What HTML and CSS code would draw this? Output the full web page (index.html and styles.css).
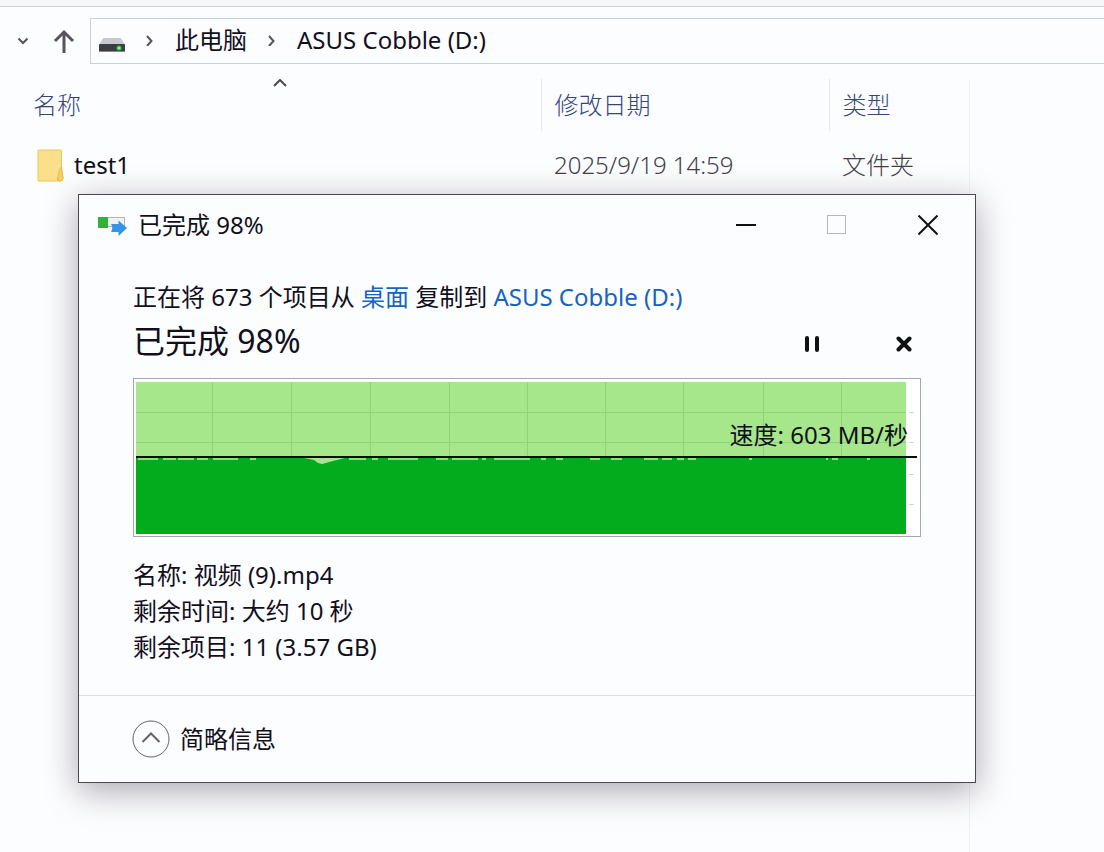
FILE: index.html
```html
<!DOCTYPE html>
<html lang="zh-CN">

<head>
    <meta charset="UTF-8">
    <meta name="viewport" content="width=device-width, initial-scale=1.0">
    <title>ASUS Cobble (D:)</title>
    <link rel="stylesheet" href="styles.css">
</head>

<body>
    <div class="explorer">
        <nav class="toolbar">
            <button class="nav-button" aria-label="最近位置">
                <svg width="12" height="8" viewBox="0 0 12 8"><path d="M1.5 1.5 L6 6 L10.5 1.5" /></svg>
            </button>
            <button class="nav-button up" aria-label="上移">
                <svg width="22" height="24" viewBox="0 0 22 24"><path d="M11 24 V3 M2 12 L11 3 L20 12" /></svg>
            </button>
            <div class="address">
                <svg width="26" height="26" viewBox="0 0 26 26">
                    <path d="M5 11 H21 Q22 11 22.500 12 L26 18 H0 L3.500 12 Q4 11 5 11 Z" fill="#c6cad0" />
                    <rect y="17" width="26" height="8" rx="1" fill="#3b3e43" />
                    <path d="M0 24.500 H26" stroke="#85888d" />
                    <circle cx="20" cy="21" r="2.500" fill="#35c94b" />
                    <circle cx="20" cy="21" r="1" fill="#b9ffbc" />
                </svg>
                <svg class="arrow" width="10" height="12" viewBox="0 0 10 12"><path d="M2 2 L6.500 7 L2 12" /></svg>
                <a href="#">此电脑</a>
                <svg class="arrow" width="10" height="12" viewBox="0 0 10 12"><path d="M2 2 L6.500 7 L2 12" /></svg>
                <a href="#">ASUS Cobble (D:)</a>
            </div>
        </nav>
        <div class="content">
            <div class="list">
                <table class="files">
                    <colgroup>
                        <col>
                        <col class="date">
                        <col class="type">
                    </colgroup>
                    <thead>
                        <tr>
                            <th>
                                <svg class="sort" width="14" height="8" viewBox="0 0 14 8"><path d="M1 7 L7 1 L13 7" /></svg>
                                <button>名称</button>
                            </th>
                            <th><button>修改日期</button></th>
                            <th><button>类型</button></th>
                        </tr>
                    </thead>
                    <tbody>
                        <tr>
                            <td>
                                <div class="file">
                                    <svg width="27" height="33" viewBox="0 0 27 33">
                                        <path d="M1.500 1 H23.500 Q24.500 1 24.500 2 V20 L26 29 Q26 32 23 32 H1.500 Q1 32 1 31 V1.500 Z" fill="#fbdf8a" stroke="#edc45c" />
                                        <path d="M20.500 31 Q22 19 24.500 18 L26 29 Q26 32 23 32 Z" fill="#f8d163" stroke="#e6b94c" />
                                    </svg>
                                    <span>test1</span>
                                </div>
                            </td>
                            <td>2025/9/19 14:59</td>
                            <td>文件夹</td>
                        </tr>
                    </tbody>
                </table>
            </div>
        </div>
    </div>

    <section class="dialog" role="dialog" aria-labelledby="dialog-title">
        <header class="titlebar">
            <svg width="30" height="22" viewBox="0 0 30 22">
                <rect x="9.500" y="3.500" width="17" height="9" fill="#f1f1f1" stroke="#b2b5b9" />
                <rect x="0" y="3" width="10" height="11" fill="#2fb23a" />
                <path d="M13 10 H20.500 V6.500 L29 14 L20.500 22 V18 H13 Q15.500 14 13 10 Z" fill="#3594e6" />
            </svg>
            <h1 id="dialog-title">已完成 98%</h1>
            <div class="window-buttons">
                <button aria-label="最小化">
                    <svg width="20" height="20" viewBox="0 0 20 20"><path d="M0 10 H20" stroke="#111" stroke-width="2" /></svg>
                </button>
                <button aria-label="最大化" disabled>
                    <svg width="20" height="20" viewBox="0 0 20 20"><rect x="0.500" y="0.500" width="18" height="18" fill="none" stroke="#b5b8b9" /></svg>
                </button>
                <button aria-label="关闭">
                    <svg width="20" height="20" viewBox="0 0 20 20"><path d="M0.500 0.500 L19.500 19.500 M19.500 0.500 L0.500 19.500" stroke="#111" stroke-width="2" /></svg>
                </button>
            </div>
        </header>

        <div class="body">
            <p class="summary">正在将 673 个项目从 <a href="#">桌面</a> 复制到 <a href="#">ASUS Cobble (D:)</a></p>
            <div class="progress">
                <h2>已完成 98%</h2>
                <div class="actions">
                    <button aria-label="暂停">
                        <svg width="16" height="16" viewBox="0 0 16 16"><path d="M3 2 V14 M13 2 V14" stroke="#111" stroke-width="4" stroke-linecap="round" /></svg>
                    </button>
                    <button aria-label="取消">
                        <svg width="16" height="16" viewBox="0 0 16 16"><path d="M2.500 2.500 L13.500 13.500 M13.500 2.500 L2.500 13.500" stroke="#111" stroke-width="4" stroke-linecap="round" /></svg>
                    </button>
                </div>
            </div>

            <div class="chart">
                <svg viewBox="0 0 786 157" preserveAspectRatio="none">
                    <rect x="2" y="3" width="770" height="75" fill="#a6e78c" />
                    <rect x="2" y="78" width="770" height="77" fill="#03ac1d" />
                    <!-- grid -->
                    <path d="M78.500 3 V77 M157.500 3 V77 M236.500 3 V77 M315.500 3 V77 M393.500 3 V77 M471.500 3 V77 M549.500 3 V77 M629.500 3 V77 M707.500 3 V77 M2 33.500 H772 M2 63.500 H772" stroke="#8fd37b" fill="none" />
                    <path d="M775 33.500 H780 M775 63.500 H780 M775 95.500 H780 M775 125.500 H780" stroke="#c9dad0" />
                    <!-- dips below the current speed -->
                    <path d="M4 80 H24 M29 80 H42 M44 80 H60 M63 80 H74 M79 80 H104 M116 80 H122 M215 80 H232 M238 80 H244 M254 80 H284 M302 80 H314 M318 80 H344 M348 80 H352 M360 80 H396 M407 80 H412 M422 80 H429 M456 80 H466 M477 80 H488 M510 80 H524 M528 80 H538 M543 80 H550 M554 80 H562 M615 80 H618 M692 80 H694 M698 80 H704 M733 80 H736" stroke="#8fe072" stroke-width="2" />
                    <path d="M170 79 H211 L199 82 L188 85 L184 84 L180 81 Z" fill="#a6e78c" />
                    <path d="M2 78 H783" stroke="#0a0f0a" stroke-width="2" />
                </svg>
                <span class="speed">速度: 603 MB/秒</span>
            </div>

            <ul class="details">
                <li>名称: 视频 (9).mp4</li>
                <li>剩余时间: 大约 10 秒</li>
                <li>剩余项目: 11 (3.57 GB)</li>
            </ul>
        </div>

        <footer class="footer">
            <button class="toggle">
                <svg width="38" height="38" viewBox="0 0 38 38">
                    <circle cx="19" cy="19" r="18" />
                    <path d="M10.500 22 L19 13.500 L27.500 22" stroke-width="2" />
                </svg>
                <span>简略信息</span>
            </button>
        </footer>
    </section>
</body>

</html>
```
FILE: styles.css
```css
* {
    box-sizing: border-box;
}

body {
    margin: 0;
    position: relative;
    font-family: "Noto Sans", "Noto Sans CJK SC", sans-serif;
    font-size: 24px;
    line-height: 36px;
    color: #120f1c;
    background-color: #fcfdff;
}

button {
    padding: 0;
    border: none;
    background: none;
    font: inherit;
    color: inherit;
    cursor: pointer;
}

svg {
    display: block;
    flex: none;
}

a {
    color: inherit;
    text-decoration: none;
}

.explorer {
    display: flex;
    flex-direction: column;
    min-height: 100vh;
    border-top: 6px solid #f5f7f8;
}

.toolbar {
    display: flex;
    align-items: center;
    padding: 11px 0 15px 17px;
    border-top: 1px solid #c9d0d6;
}

.nav-button svg {
    fill: none;
    stroke: #5a5260;
    stroke-width: 2;
}

.up {
    margin: 0 15px 0 24px;
}

.up svg {
    stroke-width: 3;
}

.address {
    flex: 1;
    display: flex;
    align-items: center;
    gap: 20px;
    height: 46px;
    padding: 0 8px 3px;
    border: 1px solid #c9d2d8;
    border-right: none;
    white-space: nowrap;
}

.arrow {
    fill: none;
    stroke: #5a5260;
    stroke-width: 2;
}

.content {
    flex: 1;
    display: flex;
    padding: 0 134px 0 20px;
}

.list {
    flex: 1;
    border-right: 1px solid #f0f3f6;
}

.files {
    width: 100%;
    table-layout: fixed;
    border-collapse: collapse;
}

.date {
    width: 288px;
}

.type {
    width: 140px;
}

.files th {
    height: 52px;
    padding: 0 13px;
    text-align: left;
    vertical-align: bottom;
    font-weight: 300;
    color: #35437f;
}

.files th + th {
    border-left: 1px solid #e4e8ec;
}

.files th button {
    display: block;
    height: 52px;
}

.files th .sort + button {
    height: 44px;
    padding-bottom: 8px;
}

.sort {
    margin: 0 auto;
    fill: none;
    stroke: #4a4552;
    stroke-width: 2;
}

.files td {
    height: 66px;
    padding: 2px 13px 0;
    font-weight: 300;
    color: #453f4c;
}

.files td:first-child {
    padding-left: 17px;
    font-weight: 400;
    color: #120f1c;
}

.file {
    display: flex;
    align-items: center;
    gap: 10px;
}

.dialog {
    position: absolute;
    top: 194px;
    left: 78px;
    right: 128px;
    border: 1px solid #4b4650;
    background-color: #fcfdff;
    box-shadow: 0 8px 32px rgba(30, 20, 35, 0.36);
}

.titlebar {
    display: flex;
    align-items: center;
    gap: 10px;
    height: 60px;
    padding-left: 19px;
}

.titlebar h1 {
    flex: 1;
    margin: 0;
    font-size: 24px;
    font-weight: normal;
}

.window-buttons {
    display: flex;
    padding-right: 2px;
}

.window-buttons button {
    width: 91px;
    height: 58px;
    display: flex;
    align-items: center;
    justify-content: center;
}

.body {
    padding: 24px 54px 30px;
}

.summary {
    margin: 0;
}

.summary a {
    color: #1664c0;
}

.progress {
    display: flex;
    align-items: center;
    justify-content: space-between;
    height: 52px;
}

.progress h2 {
    margin: 0;
    font-size: 32px;
    font-weight: normal;
}

.actions {
    display: flex;
    gap: 60px;
    padding: 6px 1px 0 0;
}

.actions button {
    width: 32px;
    height: 32px;
    display: flex;
    align-items: center;
    justify-content: center;
}

.chart {
    position: relative;
    margin-top: 11px;
    border: 1px solid #a3a8ab;
    background-color: #fff;
}

.chart svg {
    width: 100%;
    height: 157px;
}

.speed {
    position: absolute;
    top: 38px;
    right: 12px;
}

.details {
    margin: 20px 0 0;
    padding: 0;
    list-style: none;
}

.footer {
    padding: 24px 53px;
    border-top: 1px solid #dbe0e6;
}

.toggle {
    display: flex;
    align-items: center;
    gap: 10px;
}

.toggle svg {
    fill: none;
    stroke: #66616c;
}
```
